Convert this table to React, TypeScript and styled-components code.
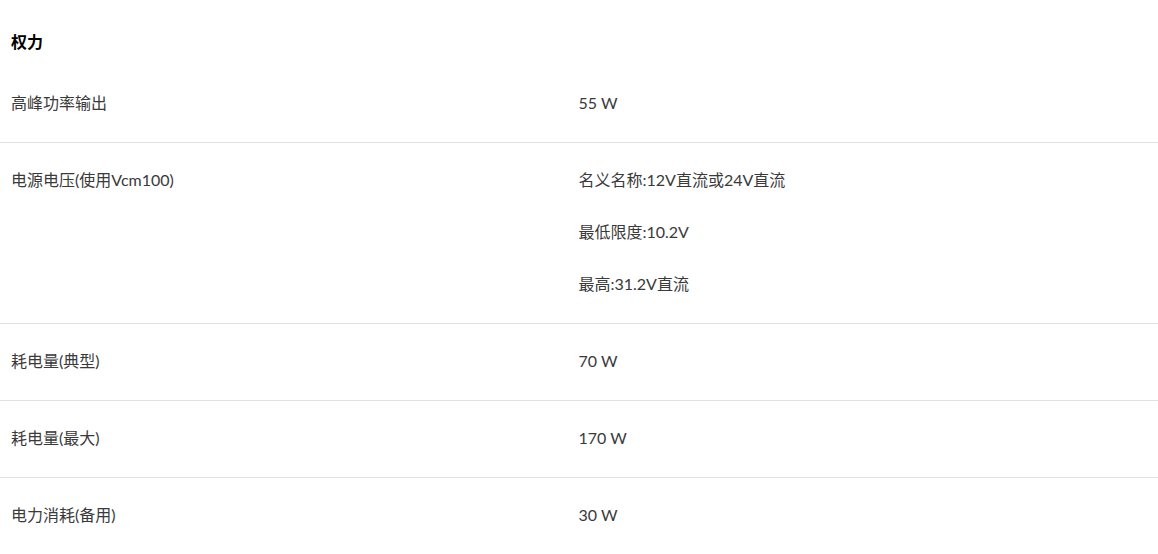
import React from 'react';
import styled, { createGlobalStyle } from 'styled-components';

const GlobalStyle = createGlobalStyle`
  html, body {
    margin: 0;
    padding: 0;
    background: #fff;
  }
  body {
    font-family: Lato, "Noto Sans CJK SC", sans-serif;
    color: #333;
  }
`;

export const SpecSection = styled.section`
  width: 100%;
  padding-top: 30px;
`;

export const SectionTitle = styled.h3`
  margin: 0;
  padding: 0 11px;
  font-size: 16px;
  line-height: 24px;
  font-weight: 700;
  color: #000;
`;

export const SpecList = styled.div`
  margin-top: 12px;
`;

export const SpecRow = styled.div<{ $last?: boolean }>`
  display: grid;
  grid-template-columns: 1fr 1fr;
  padding: 27px 12px 29px 11px;
  border-bottom: ${(p) => (p.$last ? 'none' : '1px solid #e1e1e1')};
  font-size: 16px;
  line-height: 20px;
`;

export const SpecLabel = styled.div`
  color: #3a3a3a;
`;

export const SpecValues = styled.div`
  display: flex;
  flex-direction: column;
  gap: 32px;
  color: #3a3a3a;
`;

const specs = [
  { label: '高峰功率输出', values: ['55 W'] },
  {
    label: '电源电压(使用Vcm100)',
    values: ['名义名称:12V直流或24V直流', '最低限度:10.2V', '最高:31.2V直流'],
  },
  { label: '耗电量(典型)', values: ['70 W'] },
  { label: '耗电量(最大)', values: ['170 W'] },
  { label: '电力消耗(备用)', values: ['30 W'] },
];

export default function App() {
  return (
    <>
      <GlobalStyle />
      <SpecSection>
        <SectionTitle>权力</SectionTitle>
        <SpecList>
          {specs.map((s, i) => (
            <SpecRow key={s.label} $last={i === specs.length - 1}>
              <SpecLabel>{s.label}</SpecLabel>
              <SpecValues>
                {s.values.map((v) => (
                  <span key={v}>{v}</span>
                ))}
              </SpecValues>
            </SpecRow>
          ))}
        </SpecList>
      </SpecSection>
    </>
  );
}
